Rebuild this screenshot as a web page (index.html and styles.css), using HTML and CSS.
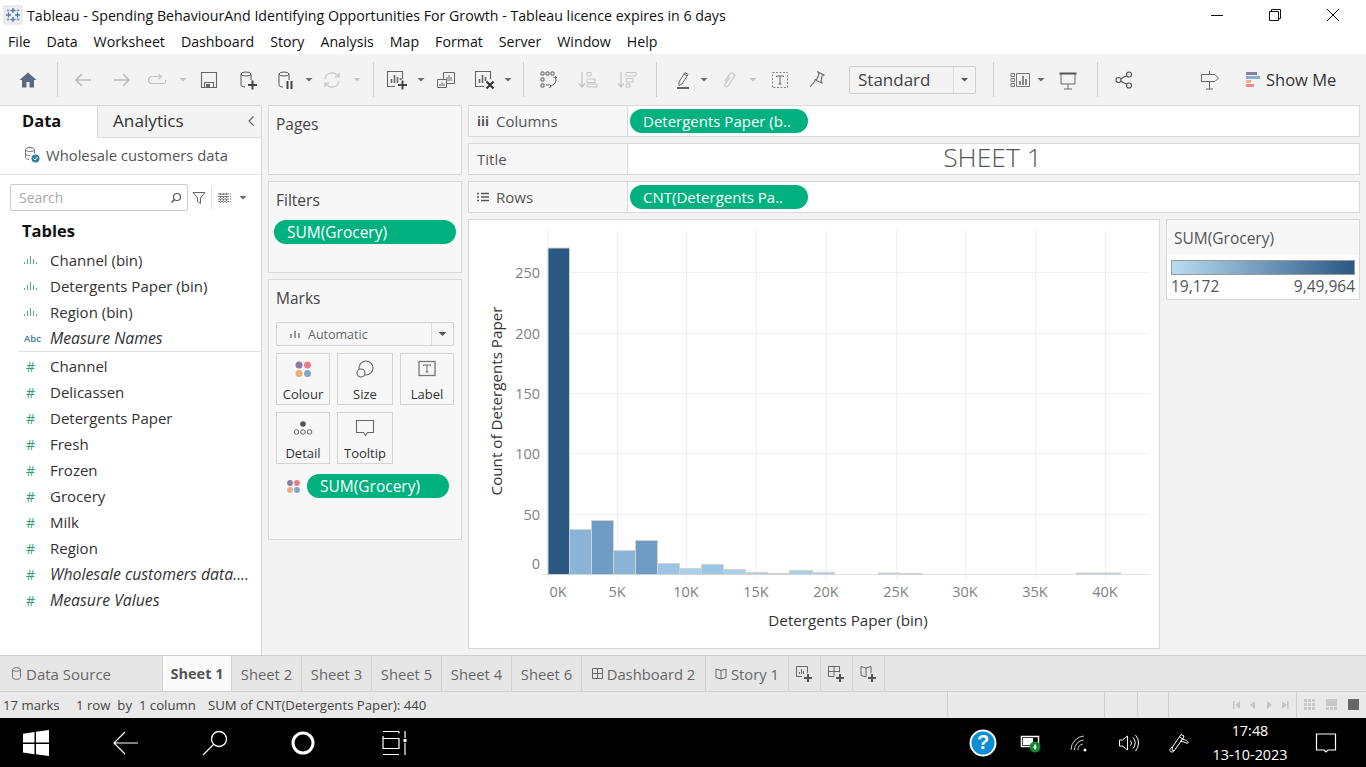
FILE: index.html
```html
<!DOCTYPE html>
<html lang="en">
<head>
    <meta charset="UTF-8">
    <title>Tableau - Spending BehaviourAnd Identifying Opportunities For Growth</title>
    <link rel="stylesheet" href="styles.css">
</head>
<body>

<!-- window title -->
<div class="titlebar">
    <svg class="app-logo" width="20" height="20" viewBox="0 0 20 20"><rect x="1" y="1" width="18" height="18" fill="#f1eef0" stroke="#ddd"/><g stroke="#4e79a7" stroke-width="1.3"><path d="M10 3v5M7.500 5.500h5M10 12v5M7.500 14.500h5M3 10h5M5.500 7.500v5M12 10h5M14.500 7.500v5"/></g><g stroke="#7fa6c9" stroke-width="1"><path d="M5 4v3M3.500 5.500h3M15 4v3M13.500 5.500h3M5 13v3M3.500 14.500h3M15 13v3M13.500 14.500h3"/></g></svg>
    <span class="title-text">Tableau - Spending BehaviourAnd Identifying Opportunities For Growth - Tableau licence expires in 6 days</span>
    <div class="win-controls">
        <svg class="win-btn" width="14" height="14" viewBox="0 0 14 14"><path d="M1 7.500h12" stroke="#111"/></svg>
        <svg class="win-btn" width="14" height="14" viewBox="0 0 14 14"><path d="M1.500 3.500h9v9h-9zM3.500 3.500v-2h9v9h-2" fill="none" stroke="#111"/></svg>
        <svg class="win-btn" width="14" height="14" viewBox="0 0 14 14"><path d="M1 1l12 12M13 1L1 13" stroke="#111"/></svg>
    </div>
</div>

<!-- menu -->
<div class="menubar">
    <span>File</span><span>Data</span><span>Worksheet</span><span>Dashboard</span><span>Story</span><span>Analysis</span><span>Map</span><span>Format</span><span>Server</span><span>Window</span><span>Help</span>
</div>

<!-- toolbar -->
<div class="toolbar">
    <span class="tool"><svg width="20" height="20" viewBox="0 0 20 20"><path d="M10 2.500L1.500 10H4v7.500h4.500V12h3v5.500H16V10h2.500z" fill="#5b6b7d"/></svg></span>
    <span class="sep ml17"></span>
    <span class="tool ml13"><svg width="20" height="20" viewBox="0 0 20 20"><path d="M18 10H3M9 4l-6 6 6 6" fill="none" stroke="#bdbdbd" stroke-width="1.600"/></svg></span>
    <span class="tool ml15"><svg width="20" height="20" viewBox="0 0 20 20"><path d="M2 10h15M11 4l6 6-6 6" fill="none" stroke="#bdbdbd" stroke-width="1.600"/></svg></span>
    <span class="tool ml12"><svg width="20" height="20" viewBox="0 0 20 20"><path d="M12 6.500H4a2.500 2.500 0 0 0 0 7h12a2 2 0 0 0 1-3.500M10.500 4l3 2.500-3 2.500" fill="none" stroke="#c4c4c4" stroke-width="1.200"/></svg></span>
    <span class="caret off ml9"></span>
    <span class="tool ml10"><svg width="18" height="18" viewBox="0 0 18 18"><path d="M1.500 1.500h15v15h-15zM4.500 16.500v-5h9v5" fill="none" stroke="#666" stroke-width="1.100"/><rect x="6" y="13" width="4" height="3" fill="#666"/></svg></span>
    <span class="tool ml15"><svg width="20" height="20" viewBox="0 0 20 20"><ellipse cx="8" cy="4" rx="5" ry="2" fill="none" stroke="#555"/><path d="M3 4v11c0 1 1.500 2 4 2M13 4v6" fill="none" stroke="#555"/><path d="M10 15h9M14.500 10.500v9" stroke="#444" stroke-width="2"/></svg></span>
    <span class="tool ml14"><svg width="20" height="20" viewBox="0 0 20 20"><ellipse cx="8" cy="4" rx="5" ry="2" fill="none" stroke="#555"/><path d="M3 4v11c0 1 1.500 2 4 2M13 4v6" fill="none" stroke="#555"/><path d="M11.500 11v8M15.500 11v8" stroke="#444" stroke-width="2"/></svg></span>
    <span class="caret ml7"></span>
    <span class="tool ml7"><svg width="20" height="20" viewBox="0 0 20 20"><path d="M3 9a7 7 0 0 1 12-4l2 2M17 11a7 7 0 0 1-12 4l-2-2M17 3v4h-4M3 17v-4h4" fill="none" stroke="#c4c4c4" stroke-width="1.200"/></svg></span>
    <span class="caret off ml9"></span>
    <span class="sep ml12"></span>
    <span class="tool ml11"><svg width="22" height="20" viewBox="0 0 22 20"><path d="M16.500 9V1.500h-15v15H9" fill="none" stroke="#666" stroke-width="1.100"/><path d="M5.500 13V9M8.500 13V5M11.500 13V7M14.500 10V8" stroke="#666" stroke-width="1.600"/><path d="M12 15h9M16.500 10.500v9" stroke="#444" stroke-width="2"/></svg></span>
    <span class="caret ml8"></span>
    <span class="tool ml9"><svg width="20" height="20" viewBox="0 0 20 20"><path d="M7.500 9V2.500h11v11H11" fill="none" stroke="#666"/><path d="M1.500 9.500h9v8h-9z" fill="#f3f3f3" stroke="#666"/><path d="M4 16v-2M6 16v-3.500M8 16v-2.500M11 11V7M13 11V5M15 11V7" stroke="#666"/></svg></span>
    <span class="tool ml15"><svg width="22" height="20" viewBox="0 0 22 20"><path d="M16.500 9V1.500h-15v15H10" fill="none" stroke="#666" stroke-width="1.100"/><path d="M5.500 13V9M8.500 13V5M11.500 11V7" stroke="#666" stroke-width="1.600"/><path d="M12.500 11.500l7 7M19.500 11.500l-7 7" stroke="#333" stroke-width="2"/></svg></span>
    <span class="caret ml7"></span>
    <span class="sep ml11"></span>
    <span class="tool ml13"><svg width="20" height="20" viewBox="0 0 20 20"><path d="M2 2h3v3H2zM7 2h3v3H7zM12 2h3v3h-3zM2 8h3v3H2zM2 14h3v3H2zM7 15h3" fill="none" stroke="#666"/><path d="M16 7c2 3 1 7-4 9M10.500 14.500l1.500 1.500-1.500 2M14.500 8l1.500-1.500 2 1.500" fill="none" stroke="#555"/></svg></span>
    <span class="tool ml15"><svg width="20" height="20" viewBox="0 0 20 20"><path d="M4 2v14M1 13.500l3 3.500 3-3.500" fill="none" stroke="#c4c4c4" stroke-width="1.200"/><path d="M9 2.500h4v3.500H9zM9 9h8v3.500H9zM9 14h10v3H9z" fill="none" stroke="#c4c4c4"/></svg></span>
    <span class="tool ml15"><svg width="20" height="20" viewBox="0 0 20 20"><path d="M4 2v14M1 13.500l3 3.500 3-3.500" fill="none" stroke="#c4c4c4" stroke-width="1.200"/><path d="M9 2.500h10V6H9zM9 8.500h7V12H9zM9 14h4v3H9z" fill="none" stroke="#c4c4c4"/></svg></span>
    <span class="sep ml17"></span>
    <span class="tool ml14"><svg width="20" height="20" viewBox="0 0 20 20"><path d="M6 12L12 2.500l3 2L9 14l-3 1.500zM11 4l3 2" fill="none" stroke="#666"/><rect x="4" y="17" width="12" height="2" fill="#666"/></svg></span>
    <span class="caret ml5"></span>
    <span class="tool ml9"><svg width="20" height="20" viewBox="0 0 20 20"><path d="M6 11l5-7a2.500 2.500 0 0 1 4 3l-6 9a1.600 1.600 0 0 1-3-2l5-7" fill="none" stroke="#c9c9c9" stroke-width="1.300"/></svg></span>
    <span class="caret off ml8"></span>
    <span class="tool ml11"><svg width="18" height="18" viewBox="0 0 18 18"><rect x="1.500" y="1.500" width="15" height="15" fill="none" stroke="#888" stroke-dasharray="2 1.500"/><path d="M5.500 6V5h7v1M9 5v8M7.500 13h3" fill="none" stroke="#666"/></svg></span>
    <span class="tool ml13"><svg width="20" height="20" viewBox="0 0 20 20"><path d="M11 2l6 3-2 1-1 5 1 2-7-3 2-1 2-5zM8 11l-5 6" fill="none" stroke="#666" stroke-width="1.100"/></svg></span>
    <span class="fit-select ml20"><span class="fit-value">Standard</span><span class="fit-arrow"><span class="caret dark"></span></span></span>
    <span class="sep ml17"></span>
    <span class="tool ml14"><svg width="20" height="16" viewBox="0 0 20 16"><path d="M1 1.500h3.500v3H1zM1 6.500h3.500v3H1zM1 11.500h3.500v3H1zM6.500 1.500h13v13h-13z" fill="none" stroke="#777"/><path d="M10 13V9M13 13V4M16 13V7" stroke="#666" stroke-width="1.500"/></svg></span>
    <span class="caret ml5"></span>
    <span class="tool ml11"><svg width="20" height="20" viewBox="0 0 20 20"><path d="M1.500 3.500h17" stroke="#555" stroke-width="2"/><path d="M3 4v10h14V4M10 14v5M6 19h8" fill="none" stroke="#666"/></svg></span>
    <span class="sep ml17"></span>
    <span class="tool ml14"><svg width="20" height="20" viewBox="0 0 20 20"><circle cx="15" cy="4.500" r="2.500" fill="none" stroke="#555" stroke-width="1.200"/><circle cx="4.500" cy="10" r="2.500" fill="none" stroke="#555" stroke-width="1.200"/><circle cx="15" cy="15.500" r="2.500" fill="none" stroke="#555" stroke-width="1.200"/><path d="M12.800 5.700L6.700 8.800M6.700 11.200l6.100 3.100" stroke="#555" stroke-width="1.200"/></svg></span>
    <span class="tool ml62"><svg width="20" height="20" viewBox="0 0 20 20"><path d="M1.500 4.500h13.500l3.500 3.500-3.500 3.500H1.500zM9.500 1v3.500M9.500 11.500V19M6 19h7" fill="none" stroke="#666"/></svg></span>
    <span class="show-me ml23">
        <svg width="16" height="18" viewBox="0 0 16 18"><rect x="1" y="1" width="11" height="3" fill="#8e7ba3"/><rect x="1" y="5" width="14" height="3" fill="#86aed3"/><rect x="1" y="9" width="5" height="3" fill="#f0b184"/><rect x="1" y="13" width="8" height="3" fill="#f08a92"/></svg>
        <span>Show Me</span>
    </span>
</div>

<div class="main">

    <!-- data pane -->
    <aside class="data-pane">
        <div class="pane-tabs">
            <div class="pane-tab active">Data</div>
            <div class="pane-tab">Analytics<svg class="collapse" width="8" height="12" viewBox="0 0 8 12"><path d="M6.500 1.500L2 6l4.500 4.500" fill="none" stroke="#666" stroke-width="1.200"/></svg></div>
        </div>
        <div class="source-row">
            <svg width="18" height="18" viewBox="0 0 18 18"><ellipse cx="7" cy="3.500" rx="4.500" ry="2" fill="none" stroke="#777"/><path d="M2.500 3.500v8c0 1 1.500 2 3.500 2M11.500 3.500v4M2.500 7.500c0 1 2 2 4.500 2" fill="none" stroke="#777"/><circle cx="12.500" cy="12.500" r="4" fill="#2f7fa8"/><path d="M10.500 12.500l1.500 1.500 2.500-3" fill="none" stroke="#fff"/></svg>
            <span>Wholesale customers data</span>
        </div>
        <div class="search-row">
            <div class="search-box">
                <span>Search</span>
                <svg width="12" height="12" viewBox="0 0 12 12"><circle cx="7" cy="5" r="3.500" fill="none" stroke="#555" stroke-width="1.200"/><path d="M4.500 7.500L1.500 10.500" stroke="#555" stroke-width="1.400"/></svg>
            </div>
            <svg class="filter-icon" width="14" height="14" viewBox="0 0 14 14"><path d="M1 1.500h12L8.500 7v5.500l-3-2V7z" fill="none" stroke="#666"/></svg>
            <span class="vline"></span>
            <svg width="13" height="10" viewBox="0 0 13 10"><path d="M0 1h13M0 3.500h13M0 6h13M0 8.500h13M2.500 0v10M5.500 0v10M8.500 0v10" stroke="#777" stroke-dasharray="2 1"/></svg>
            <span class="caret"></span>
        </div>
        <div class="tables-head">Tables</div>
        <ul class="field-list">
            <li><span class="ficon bars"><i></i><i></i><i></i><i></i><i></i></span>Channel (bin)</li>
            <li><span class="ficon bars"><i></i><i></i><i></i><i></i><i></i></span>Detergents Paper (bin)</li>
            <li><span class="ficon bars"><i></i><i></i><i></i><i></i><i></i></span>Region (bin)</li>
            <li class="ital"><span class="ficon abc">Abc</span>Measure Names</li>
        </ul>
        <ul class="field-list measures">
            <li><span class="ficon hash">#</span>Channel</li>
            <li><span class="ficon hash">#</span>Delicassen</li>
            <li><span class="ficon hash">#</span>Detergents Paper</li>
            <li><span class="ficon hash">#</span>Fresh</li>
            <li><span class="ficon hash">#</span>Frozen</li>
            <li><span class="ficon hash">#</span>Grocery</li>
            <li><span class="ficon hash">#</span>Milk</li>
            <li><span class="ficon hash">#</span>Region</li>
            <li class="ital"><span class="ficon hash">#</span>Wholesale customers data....</li>
            <li class="ital"><span class="ficon hash">#</span>Measure Values</li>
        </ul>
    </aside>

    <!-- pages, filters, marks -->
    <div class="cards">
        <section class="card pages-card"><h3>Pages</h3></section>
        <section class="card filters-card">
            <h3>Filters</h3>
            <div class="pill filter-pill">SUM(Grocery)</div>
        </section>
        <section class="card marks-card">
            <h3>Marks</h3>
            <div class="marks-select">
                <svg width="12" height="10" viewBox="0 0 12 10"><path d="M2 9V5M6 9V2M10 9V4" stroke="#999" stroke-width="2"/></svg>
                <span class="marks-type">Automatic</span>
                <span class="marks-arrow"><span class="caret dark"></span></span>
            </div>
            <div class="marks-grid">
                <div class="mark-btn">
                    <svg width="18" height="18" viewBox="0 0 18 18"><circle cx="5" cy="5" r="3.500" fill="#8e7ba3"/><circle cx="13.500" cy="5" r="3.500" fill="#ee7a85"/><circle cx="5" cy="13.500" r="3.500" fill="#f0ab7c"/><circle cx="13.500" cy="13.500" r="3.500" fill="#7ea6d0"/></svg>
                    <span>Colour</span>
                </div>
                <div class="mark-btn">
                    <svg width="20" height="18" viewBox="0 0 20 18"><circle cx="11" cy="8" r="7" fill="none" stroke="#666" stroke-width="1.100"/><circle cx="6" cy="13" r="4" fill="#f7f7f7" stroke="#666" stroke-width="1.100"/></svg>
                    <span>Size</span>
                </div>
                <div class="mark-btn">
                    <svg width="18" height="18" viewBox="0 0 18 18"><rect x="1" y="1.500" width="16" height="14" fill="none" stroke="#777" stroke-width="1.300"/><path d="M5.500 6V5h7v1M9 5v7M7.500 12h3" fill="none" stroke="#666"/></svg>
                    <span>Label</span>
                </div>
                <div class="mark-btn">
                    <svg width="20" height="18" viewBox="0 0 20 18"><circle cx="10" cy="5" r="2.800" fill="#555"/><circle cx="3.500" cy="13" r="2.300" fill="none" stroke="#666"/><circle cx="10" cy="13" r="2.300" fill="none" stroke="#666"/><circle cx="16.500" cy="13" r="2.300" fill="none" stroke="#666"/></svg>
                    <span>Detail</span>
                </div>
                <div class="mark-btn">
                    <svg width="20" height="18" viewBox="0 0 20 18"><path d="M1.500 1.500h17v12h-6l-2 3-2-3h-7z" fill="none" stroke="#666" stroke-width="1.100"/></svg>
                    <span>Tooltip</span>
                </div>
            </div>
            <div class="mark-field">
                <svg width="15" height="15" viewBox="0 0 15 15"><circle cx="4" cy="4" r="2.900" fill="#8e7ba3"/><circle cx="11" cy="4" r="2.900" fill="#ee7a85"/><circle cx="4" cy="11" r="2.900" fill="#f0ab7c"/><circle cx="11" cy="11" r="2.900" fill="#7ea6d0"/></svg>
                <div class="pill mark-pill">SUM(Grocery)</div>
            </div>
        </section>
    </div>

    <!-- view -->
    <div class="view">
        <div class="shelf">
            <div class="shelf-label"><b class="shelf-sym">iii</b>Columns</div>
            <div class="shelf-body"><div class="pill shelf-pill">Detergents Paper (b..</div></div>
        </div>
        <div class="shelf">
            <div class="shelf-label">Title</div>
            <div class="shelf-body sheet-title">SHEET 1</div>
        </div>
        <div class="shelf">
            <div class="shelf-label"><svg class="shelf-sym" width="12" height="10" viewBox="0 0 12 10"><path d="M0 1.500h2M4 1.500h8M0 5h2M4 5h8M0 8.500h2M4 8.500h8" stroke="#555" stroke-width="1.500"/></svg>Rows</div>
            <div class="shelf-body"><div class="pill shelf-pill">CNT(Detergents Pa..</div></div>
        </div>
        <div class="view-body">
            <div class="chart-card">
                <svg class="chart" width="690" height="428" viewBox="469 220 690 428">
                    <g stroke="#f0f0f0">
                        <path d="M547.500 230V580M617.500 230V580M686.500 230V580M756.500 230V580M826.500 230V580M896.500 230V580M965.500 230V580M1035.500 230V580M1105.500 230V580"/>
                        <path d="M547 272.500H1150M547 333.500H1150M547 393.500H1150M547 453.500H1150M547 514.500H1150"/>
                        <path d="M542 574.500H1150" stroke="#e2e2e2"/>
                    </g>
                    <g stroke="#d2d2d2" stroke-width="1">
                        <rect x="548" y="248" width="21.500" height="326.500" fill="#2b5783"/>
                        <rect x="569.500" y="529.500" width="22" height="45" fill="#8ab5d8"/>
                        <rect x="591.500" y="520.500" width="22" height="54" fill="#6e9cc4"/>
                        <rect x="613.500" y="550.500" width="22" height="24" fill="#8ab5d8"/>
                        <rect x="635.500" y="540.500" width="22" height="34" fill="#6e9cc4"/>
                        <rect x="657.500" y="563.500" width="22" height="11" fill="#9bc5e4"/>
                        <rect x="679.500" y="568.500" width="22" height="6" fill="#a9d0ea"/>
                        <rect x="701.500" y="564.500" width="22" height="10" fill="#9bc5e4"/>
                        <rect x="723.500" y="569.500" width="22" height="5" fill="#a9d0ea"/>
                        <rect x="745.500" y="572.500" width="22" height="2" fill="#a9d0ea"/>
                        <rect x="767.500" y="573.500" width="22" height="1" fill="#a9d0ea"/>
                        <rect x="789.500" y="570.500" width="23" height="4" fill="#a9d0ea"/>
                        <rect x="812.500" y="572.500" width="22" height="2" fill="#a9d0ea"/>
                        <rect x="878.500" y="573" width="22" height="1.500" fill="#a9d0ea"/>
                        <rect x="900.500" y="573.500" width="22" height="1" fill="#a9d0ea"/>
                        <rect x="1076.500" y="573" width="22" height="1.500" fill="#a9d0ea"/>
                        <rect x="1098.500" y="573" width="22" height="1.500" fill="#a9d0ea"/>
                    </g>
                    <g class="tick" text-anchor="end">
                        <text x="540" y="278">250</text>
                        <text x="540" y="339">200</text>
                        <text x="540" y="399">150</text>
                        <text x="540" y="459">100</text>
                        <text x="540" y="520">50</text>
                        <text x="540" y="569">0</text>
                    </g>
                    <g class="tick" text-anchor="middle">
                        <text x="558" y="597">0K</text>
                        <text x="617" y="597">5K</text>
                        <text x="686" y="597">10K</text>
                        <text x="756" y="597">15K</text>
                        <text x="826" y="597">20K</text>
                        <text x="896" y="597">25K</text>
                        <text x="965" y="597">30K</text>
                        <text x="1035" y="597">35K</text>
                        <text x="1105" y="597">40K</text>
                    </g>
                    <text class="axis-title" text-anchor="middle" transform="translate(502 401) rotate(-90)">Count of Detergents Paper</text>
                    <text class="axis-title" text-anchor="middle" x="848" y="626">Detergents Paper (bin)</text>
                </svg>
            </div>
            <div class="legend">
                <div class="legend-title">SUM(Grocery)</div>
                <div class="legend-body">
                    <div class="legend-ramp"></div>
                    <div class="legend-range"><span>19,172</span><span>9,49,964</span></div>
                </div>
            </div>
        </div>
    </div>
</div>

<!-- sheet tabs -->
<div class="tabs">
    <div class="tab src"><svg width="11" height="13" viewBox="0 0 11 13"><ellipse cx="5.500" cy="2.500" rx="4" ry="1.800" fill="none" stroke="#777"/><path d="M1.500 2.500v8c0 1 1.800 1.800 4 1.800s4-.8 4-1.800v-8" fill="none" stroke="#777"/></svg>Data Source</div>
    <div class="tab cur">Sheet 1</div>
    <div class="tab w70">Sheet 2</div>
    <div class="tab w70">Sheet 3</div>
    <div class="tab w70">Sheet 5</div>
    <div class="tab w70">Sheet 4</div>
    <div class="tab w70">Sheet 6</div>
    <div class="tab dash"><svg width="11" height="11" viewBox="0 0 11 11"><path d="M.5.500h10v10H.5zM5.500.500v10M.5 5.500h10" fill="none" stroke="#666"/></svg>Dashboard 2</div>
    <div class="tab story"><svg width="12" height="12" viewBox="0 0 12 12"><path d="M6 2.500L1 1v8.500L6 11l5-1.500V1zM6 2.500V11" fill="none" stroke="#666"/></svg>Story 1</div>
    <div class="tab add"><svg width="17" height="16" viewBox="0 0 17 16"><path d="M11.500 7V.5H.5v10H6" fill="none" stroke="#666"/><path d="M3.500 8V6M5.500 8V3M7.500 8V5" stroke="#666"/><path d="M8 12h8M12 8v8" stroke="#555" stroke-width="2"/></svg></div>
    <div class="tab add"><svg width="17" height="16" viewBox="0 0 17 16"><path d="M11.500 6.500V.5H.5v10H6M6 .5v10M.5 5.500h11" fill="none" stroke="#666"/><path d="M8 12h8M12 8v8" stroke="#555" stroke-width="2"/></svg></div>
    <div class="tab add"><svg width="17" height="16" viewBox="0 0 17 16"><path d="M6 2L1 .5v9L6 11M6 2l5-1.500V7M6 2v9" fill="none" stroke="#666"/><path d="M8 12h8M12 8v8" stroke="#555" stroke-width="2"/></svg></div>
</div>

<!-- status bar -->
<div class="statusbar">
    <span class="st marks-count">17 marks</span>
    <span class="st row-count">1 row&nbsp; by&nbsp; 1 column</span>
    <span class="st">SUM of CNT(Detergents Paper): 440</span>
    <span class="st-cells">
        <i class="cell c157"></i><i class="cell c33"></i><i class="cell c31"></i><i class="cell c58"></i>
        <svg class="nav-icons" width="56" height="10" viewBox="0 0 56 10"><path d="M0 1h1.500v8H0zM7 1v8L2.500 5zM22 1v8l-5-4zM34 1v8l5-4zM49 1v8l5-4zM54 1h1.500v8H54z" fill="#c4c4c4"/></svg>
        <i class="cell c0"></i>
        <svg class="view-icons" width="56" height="12" viewBox="0 0 56 12"><path d="M0 0h3v3H0zM4 0h3v3H4zM8 0h3v3H8zM0 4h3v3H0zM4 4h3v3H4zM8 4h3v3H8zM0 8h3v3H0zM4 8h3v3H4zM8 8h3v3H8z" fill="#c8c8c8"/><path d="M22 0h11v7H22zM22 8h3v3h-3zM26 8h3v3h-3zM30 8h3v3h-3z" fill="#c8c8c8"/><rect x="44" y="0" width="11" height="11" fill="#666"/></svg>
    </span>
</div>

<!-- windows taskbar -->
<div class="taskbar">
    <svg class="task-ic" width="26" height="26" viewBox="0 0 26 26"><path d="M0 3.800L11.500 2v10.500H0zM13 1.800L26 0v12.500H13zM0 14h11.500v10.300L0 22.500zM13 14h13v12l-13-1.800z" fill="#fff"/></svg>
    <svg class="task-ic tk-back" width="26" height="26" viewBox="0 0 26 26"><path d="M26 13H2M13 2L2 13l11 11" fill="none" stroke="#fff" stroke-width="1.200"/></svg>
    <svg class="task-ic tk-find" width="26" height="26" viewBox="0 0 26 26"><circle cx="17" cy="9" r="7.500" fill="none" stroke="#fff" stroke-width="1.300"/><path d="M11.500 14.500L1 25" stroke="#fff" stroke-width="1.300"/></svg>
    <svg class="task-ic tk-ring" width="26" height="26" viewBox="0 0 26 26"><circle cx="13" cy="13" r="10" fill="none" stroke="#fff" stroke-width="3"/></svg>
    <svg class="task-ic tk-view" width="26" height="26" viewBox="0 0 26 26"><path d="M1 1.500h16M1 8.500h16v10H1zM1 24.500h16M1 8.500V6M17 1.500v2M23 1v7M23 13v12" fill="none" stroke="#fff" stroke-width="1.200"/><rect x="21.500" y="9" width="3" height="3" fill="#fff"/></svg>
    <div class="tray">
        <svg class="help" width="28" height="28" viewBox="0 0 28 28"><circle cx="14" cy="14" r="12.500" fill="#0a8fd6" stroke="#fff" stroke-width="2"/><text x="14" y="20" class="help-q" text-anchor="middle">?</text></svg>
        <svg width="22" height="22" viewBox="0 0 22 22"><rect x="1.500" y="4.500" width="17" height="10" fill="none" stroke="#fff" stroke-width="1.500"/><rect x="3" y="6" width="10" height="7" fill="#fff"/><circle cx="15" cy="15" r="5.500" fill="#0f8a2f"/><path d="M15 12c2 2 2 4 0 6-2-2-2-4 0-6z" fill="#fff"/></svg>
        <svg width="20" height="20" viewBox="0 0 20 20"><path d="M1 17a14 14 0 0 1 13-14M4.500 17a10 10 0 0 1 9-10M8 17a6 6 0 0 1 5-6" fill="none" stroke="#ccc"/><circle cx="15" cy="17" r="1.500" fill="#fff"/></svg>
        <svg width="22" height="22" viewBox="0 0 22 22"><path d="M1.500 8h3l5-4v14l-5-4h-3zM12.500 8.500a4 4 0 0 1 0 5M15 5.500a8 8 0 0 1 0 11M17.500 3a12 12 0 0 1 0 16" fill="none" stroke="#fff"/></svg>
        <svg width="22" height="22" viewBox="0 0 22 22"><path d="M6 19l-2-1 .5-3L13 2.500l3 1.500-1 2.500zM11.500 5l3.500 2M12 9c4 .5 7 3 8 2s-2-3.500-7-4M4 15c-3 2-3 5 0 5 1 0 2-.5 2-1" fill="none" stroke="#fff"/></svg>
        <div class="clock"><span>17:48</span><span>13-10-2023</span></div>
        <svg width="22" height="22" viewBox="0 0 22 22"><path d="M1.500 2h19v16H13l-2 2-2-2H1.500z" fill="none" stroke="#fff" stroke-width="1.200"/></svg>
    </div>
</div>

</body>
</html>
```

FILE: styles.css
```css
* { box-sizing: border-box; }

body {
    margin: 0;
    width: 1366px;
    height: 767px;
    overflow: hidden;
    display: flex;
    flex-direction: column;
    background: #f3f3f3;
    color: #333;
    font-family: "Open Sans", "Noto Sans", sans-serif;
    font-size: 15px;
}

/* title + menu */
.titlebar {
    height: 30px;
    flex: none;
    display: flex;
    align-items: center;
    background: #fff;
    color: #111;
    padding-left: 3px;
    font-size: 14.200px;
}
.app-logo { margin-right: 4px; }
.win-controls {
    margin-left: auto;
    display: flex;
    gap: 44px;
    padding-right: 26px;
    align-items: center;
}
.menubar {
    height: 24px;
    flex: none;
    display: flex;
    gap: 16px;
    align-items: center;
    background: #fff;
    color: #111;
    padding: 0 0 2px 8px;
    font-size: 14.200px;
}

/* toolbar */
.toolbar {
    height: 51px;
    flex: none;
    display: flex;
    align-items: center;
    padding-left: 16px;
    background: #f3f3f3;
}
.tool {
    width: 24px;
    height: 24px;
    flex: none;
    display: flex;
    align-items: center;
    justify-content: center;
}
.sep {
    width: 1px;
    height: 35px;
    flex: none;
    background: #cfcfcf;
}
.caret {
    width: 8px;
    height: 4px;
    flex: none;
    background: #6b6b6b;
    clip-path: polygon(0 0, 100% 0, 50% 100%);
}
.caret.off { background: #c4c4c4; }
.caret.dark { background: #555; }
.ml5 { margin-left: 5px; }
.ml7 { margin-left: 7px; }
.ml8 { margin-left: 8px; }
.ml9 { margin-left: 9px; }
.ml10 { margin-left: 10px; }
.ml11 { margin-left: 11px; }
.ml12 { margin-left: 12px; }
.ml13 { margin-left: 13px; }
.ml14 { margin-left: 14px; }
.ml15 { margin-left: 15px; }
.ml17 { margin-left: 17px; }
.ml20 { margin-left: 20px; }
.ml23 { margin-left: 23px; }
.ml62 { margin-left: 62px; }
.fit-select {
    width: 127px;
    height: 28px;
    flex: none;
    display: flex;
    border: 1px solid #cfcfcf;
    border-radius: 2px;
    font-size: 17px;
    color: #444;
}
.fit-value { flex: 1; padding-left: 8px; line-height: 25px; }
.fit-arrow {
    width: 22px;
    border-left: 1px solid #ddd;
    display: flex;
    align-items: center;
    justify-content: center;
}
.show-me {
    display: flex;
    align-items: center;
    gap: 5px;
    font-size: 16.500px;
    color: #333;
}

/* main area */
.main {
    height: 550px;
    flex: none;
    display: flex;
}
.data-pane {
    width: 262px;
    flex: none;
    background: #fff;
    border-top: 1px solid #d8d8d8;
    border-right: 1px solid #d8d8d8;
}
.pane-tabs { display: flex; height: 32px; }
.pane-tab {
    font-size: 17.200px;
    line-height: 30px;
    color: #333;
    position: relative;
    flex: 1;
    padding-left: 15px;
    background: #f3f3f3;
    border-bottom: 1px solid #d8d8d8;
    border-left: 1px solid #d8d8d8;
}
.pane-tab.active {
    flex: none;
    width: 97px;
    padding-left: 22px;
    font-size: 16.500px;
    background: #fff;
    border: none;
    font-weight: 700;
    color: #111;
}
.collapse { position: absolute; right: 6px; top: 9px; }
.source-row {
    height: 37px;
    display: flex;
    align-items: center;
    gap: 5px;
    padding: 0 0 2px 23px;
    border-bottom: 1px solid #e2e2e2;
    color: #555;
    font-size: 14.800px;
}
.search-row {
    display: flex;
    align-items: center;
    margin-top: 9px;
    padding-left: 10px;
    height: 27px;
    font-size: 14px;
}
.search-box {
    width: 178px;
    height: 27px;
    display: flex;
    align-items: center;
    justify-content: space-between;
    padding: 0 5px 0 8px;
    border: 1px solid #ccc;
    border-radius: 2px;
    color: #aaa;
}
.filter-icon { margin: 0 5px 0 4px; }
.vline {
    width: 1px;
    height: 22px;
    background: #ddd;
    margin-right: 6px;
}
.search-row .caret { margin-left: 8px; }
.tables-head {
    height: 24px;
    margin-top: 8px;
    padding-left: 22px;
    font-size: 16.500px;
    font-weight: 700;
    line-height: 24px;
    color: #111;
}
.field-list {
    list-style: none;
    margin: 4px 0 0;
    padding: 0;
}
.field-list li {
    height: 26px;
    display: flex;
    align-items: center;
    color: #333;
    white-space: nowrap;
}
.field-list li.ital { font-style: italic; font-size: 15.800px; }
.field-list.measures {
    margin: 0 0 0 18px;
    padding-top: 1px;
    border-top: 1px solid #e2e2e2;
}
.field-list.measures li { margin-left: -18px; }
.ficon {
    width: 50px;
    flex: none;
    padding-left: 24px;
    font-style: normal;
    color: #2f9c7e;
}
.ficon.hash { font-size: 14px; padding-left: 26px; }
.ficon.abc {
    font-size: 9.500px;
    font-weight: 600;
    color: #4a7b94;
}
.ficon.bars {
    display: flex;
    align-items: flex-end;
    gap: 2px;
    height: 8px;
}
.ficon.bars i { width: 1px; height: 5px; background: #4fa98e; }
.ficon.bars i:nth-child(1), .ficon.bars i:nth-child(5) { height: 2px; }
.ficon.bars i:nth-child(3) { height: 8px; }

/* shelves cards */
.cards {
    width: 200px;
    flex: none;
    padding: 0 0 0 6px;
    display: flex;
    flex-direction: column;
    gap: 6px;
}
.card {
    width: 194px;
    background: #f7f7f7;
    border: 1px solid #d8d8d8;
    padding: 0 5px;
    flex: none;
}
.card h3 {
    margin: 0;
    height: 35px;
    padding: 0 2px;
    font-size: 15.500px;
    font-weight: 400;
    line-height: 35px;
    color: #444;
}
.pages-card { height: 70px; }
.pages-card h3 { height: 36px; line-height: 36px; }
.filters-card { height: 92px; }
.filters-card h3 { height: 38px; line-height: 36px; }
.marks-card { height: 261px; padding: 0 7px; }
.marks-card h3 { height: 42px; line-height: 36px; padding: 0; }
.pill {
    background: #00b180;
    color: #fff;
    font-size: 15.500px;
    font-weight: 500;
    height: 24px;
    line-height: 24px;
    border-radius: 12px;
    padding-left: 13px;
    white-space: nowrap;
}
.filter-pill { width: 182px; }
.marks-select {
    height: 24px;
    display: flex;
    align-items: center;
    border: 1px solid #d4d4d4;
    border-radius: 2px;
    background: #f7f7f7;
    padding-left: 12px;
    font-size: 12.500px;
    color: #666;
}
.marks-type { flex: 1; padding-left: 7px; }
.marks-arrow {
    width: 22px;
    height: 22px;
    border-left: 1px solid #ddd;
    display: flex;
    align-items: center;
    justify-content: center;
}
.marks-grid {
    display: grid;
    grid-template-columns: 54px 56px 54px;
    grid-auto-rows: 52px;
    gap: 7px;
    margin-top: 7px;
}
.mark-btn {
    border: 1px solid #d4d4d4;
    display: flex;
    flex-direction: column;
    align-items: center;
    justify-content: space-between;
    padding: 6px 0 1px;
    font-size: 13px;
    color: #333;
}
.mark-field {
    display: flex;
    align-items: center;
    gap: 6px;
    margin-top: 10px;
    padding-left: 10px;
}
.mark-pill { width: 142px; }

/* view */
.view {
    flex: 1;
    padding: 0 6px 6px;
    display: flex;
    flex-direction: column;
    gap: 6px;
    min-width: 0;
}
.shelf {
    height: 32px;
    flex: none;
    display: flex;
    border: 1px solid #d8d8d8;
    background: #fff;
}
.shelf-label {
    width: 159px;
    flex: none;
    display: flex;
    align-items: center;
    padding-left: 8px;
    background: #f7f7f7;
    border-right: 1px solid #d8d8d8;
    color: #555;
}
.shelf-sym {
    width: 19px;
    font-size: 13px;
    font-weight: 700;
    flex: none;
    padding-right: 7px;
}
.shelf-body {
    flex: 1;
    display: flex;
    align-items: center;
    padding-left: 2px;
}
.shelf-pill { width: 178px; font-size: 15px; }
.sheet-title {
    justify-content: center;
    padding: 0 2px 4px 0;
    font-size: 26.500px;
    font-weight: 300;
    color: #555;
}
.view-body {
    flex: 1;
    display: flex;
    gap: 6px;
    align-items: flex-start;
}
.chart-card {
    width: 692px;
    height: 430px;
    flex: none;
    background: #fff;
    border: 1px solid #d8d8d8;
}
.chart { display: block; }
.tick { font-size: 14.500px; fill: #7f7f7f; }
.axis-title { font-size: 15.200px; fill: #333; }
.legend {
    width: 194px;
    height: 81px;
    flex: none;
    border: 1px solid #d8d8d8;
    background: #fff;
    font-size: 15.500px;
}
.legend-title {
    height: 35px;
    background: #f7f7f7;
    padding: 7px 0 0 7px;
    color: #555;
}
.legend-body { padding: 5px 4px 0; }
.legend-ramp {
    height: 15px;
    border: 1px solid #9a9a9a;
    background: linear-gradient(to right, #b8dcf0, #2b5783);
}
.legend-range {
    display: flex;
    justify-content: space-between;
    color: #555;
    line-height: 23px;
}

/* tabs */
.tabs {
    height: 37px;
    flex: none;
    display: flex;
    background: #e6e6e6;
    border-top: 1px solid #cfcfcf;
    border-bottom: 1px solid #cfcfcf;
    color: #666;
    font-size: 14.800px;
}
.tab {
    height: 35px;
    display: flex;
    align-items: center;
    justify-content: center;
    gap: 4px;
    border-right: 1px solid #cfcfcf;
    flex: none;
    white-space: nowrap;
}
.tab.src { width: 163px; justify-content: flex-start; padding-left: 11px; font-size: 15px; }
.tab.cur { width: 69px; background: #fafafa; font-weight: 700; font-size: 14.500px; color: #555; }
.tab.w70 { width: 70px; }
.tab.dash { width: 124px; }
.tab.story { width: 83px; }
.tab.add { width: 32px; }

/* status */
.statusbar {
    height: 26px;
    flex: none;
    display: flex;
    align-items: center;
    background: #e9e9e9;
    color: #444;
    font-size: 13.200px;
    white-space: nowrap;
    position: relative;
    padding-left: 3px;
}
.st { margin-right: 20px; }
.marks-count { width: 53px; }
.row-count { width: 112px; }
.st-cells {
    position: absolute;
    left: 947px;
    top: 0;
    height: 26px;
    display: flex;
    align-items: center;
}
.cell {
    height: 26px;
    border-left: 1px solid #cfcfcf;
    flex: none;
}
.c157 { width: 157px; }
.c33 { width: 33px; }
.c31 { width: 31px; }
.c58 { width: 58px; }
.c0 { width: 1px; margin-left: 7px; }
.nav-icons { margin-left: 7px; }
.view-icons { margin-left: 7px; }

/* taskbar */
.taskbar {
    height: 49px;
    flex: none;
    background: #000;
    display: flex;
    align-items: center;
    color: #fff;
    padding-left: 23px;
}
.task-ic { flex: none; }
.tk-back { margin-left: 63px; }
.tk-find { margin-left: 64px; }
.tk-ring { margin-left: 62px; }
.tk-view { margin-left: 66px; }
.tray {
    margin-left: auto;
    display: flex;
    align-items: center;
    gap: 28px;
    padding-right: 29px;
}
.help { margin-right: -5px; }
.help-q { font-size: 20px; font-weight: 700; fill: #fff; font-family: "Liberation Sans", sans-serif; }
.clock {
    width: 80px;
    margin: 0 -3px 0 -8px;
    display: flex;
    flex-direction: column;
    align-items: center;
    gap: 3px;
    font-size: 14.400px;
    line-height: 21px;
}
```
